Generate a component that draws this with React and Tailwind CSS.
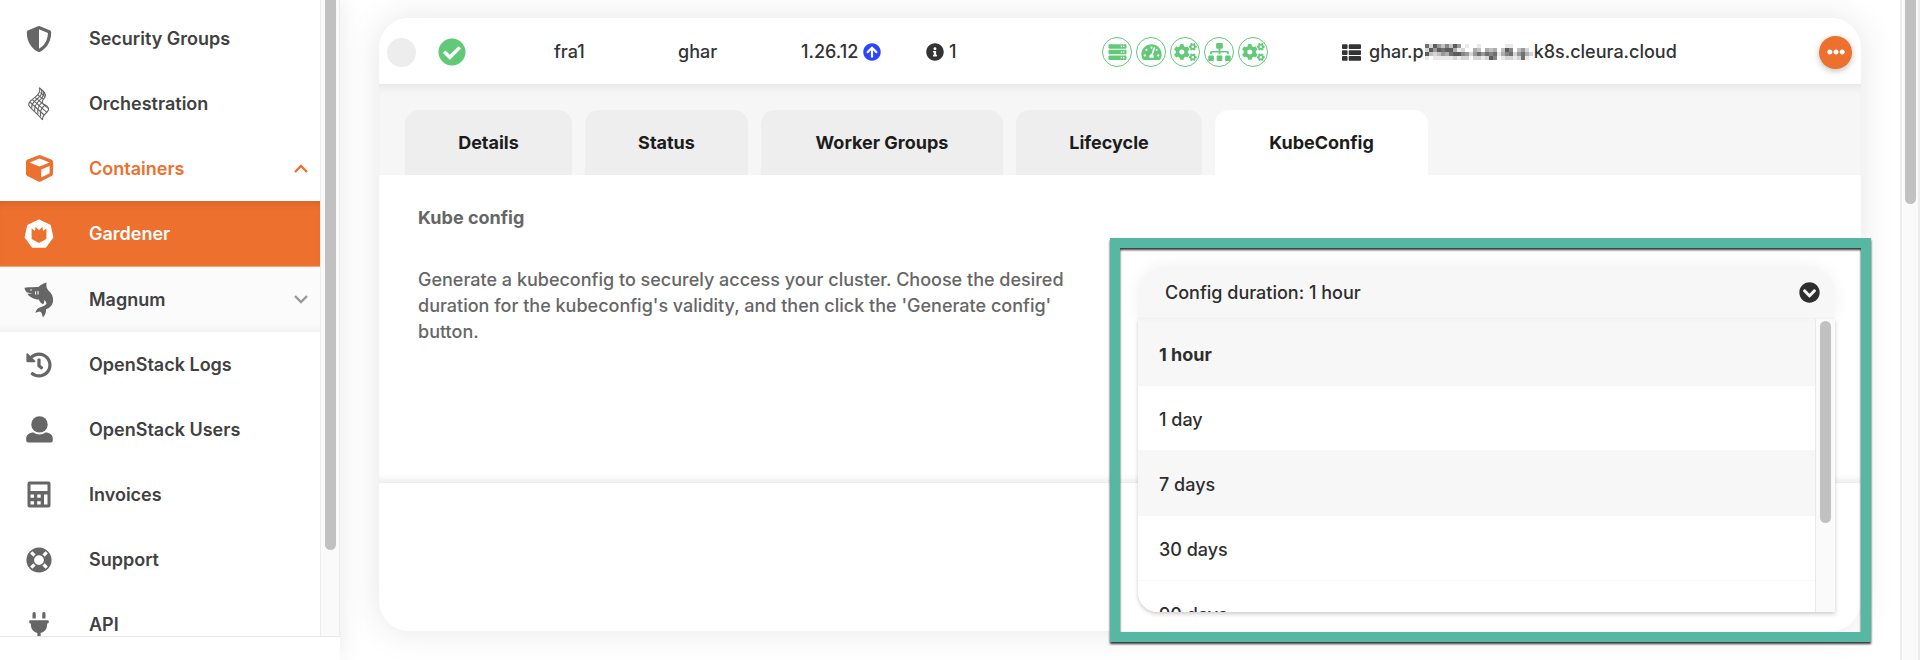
import React from "react";
import {
  FaArrowCircleUp,
  FaCheckCircle,
  FaChevronCircleDown,
  FaCogs,
  FaCube,
  FaEllipsisH,
  FaHistory,
  FaInfoCircle,
  FaLifeRing,
  FaPlug,
  FaServer,
  FaShieldAlt,
  FaSitemap,
  FaTachometerAlt,
  FaThList,
} from "react-icons/fa";

function OrchestrationIcon() {
  return (
    <svg viewBox="0 0 22 34" className="h-[34px] w-[22px]" fill="none" stroke="currentColor" strokeWidth="1.1" strokeLinejoin="round" aria-hidden="true">
      <path d="M11.3 0.8 C16 4.5 18.6 7 17 10 C15.6 12.6 12.6 14.4 15 16.6 C18 18.6 21.4 20 20.4 23 C19 26.6 13.6 28 14.6 33" />
      <path d="M11.3 0.8 C13.2 5 10 8 6.6 10.6 C2.6 13.6 -0.4 16 1 18.6 C4 23 10 27 14.6 33" />
      <path d="M13.4 2.6 C15.2 7 12 9.6 8.8 12.2 C5.2 15 3 17.4 3.8 21.4" />
      <path d="M15.4 4.6 C17 9 13.4 11.6 11 13.8 C8 16.6 6 19.6 6.8 24.4" />
      <path d="M14.2 15.4 C11 18 9 21.6 10 27.2" />
      <path d="M17 18 C14 20.4 11.4 24 12.6 29.6" />
      <path d="M12.4 5.6 L17 9.6 M9.8 8 L15.4 12.4 M7 10.4 L20.6 21.6 M4.4 12.6 L18.6 25.2 M1.8 15 L16.2 28" />
    </svg>
  );
}

function GardenerIcon() {
  return (
    <svg viewBox="0 0 30 30" className="h-[30px] w-[30px]" aria-hidden="true">
      <path
        fill="currentColor"
        stroke="currentColor"
        strokeWidth="1.5"
        strokeLinejoin="round"
        d="M15 1.2 L26 6.4 L28.6 18.2 L21.4 28 H8.6 L1.4 18.2 L4 6.4 Z"
      />
      <path fill="#ed702e" d="M7.6 9.6 L11 12 L11.6 7.8 L15 11.2 L18.4 7.8 L19 12 L22.4 9.6 V20 L15 24 L7.6 20 Z" />
    </svg>
  );
}

function SharkIcon() {
  return (
    <svg viewBox="0 0 30 36" className="h-9 w-[30px]" aria-hidden="true">
      <path
        fill="currentColor"
        d="M0.5 5.8 C6 5 11 5.2 14.5 5 C16.5 2.8 19.5 1 22.6 0.4 C22 3.5 22.4 6 24.2 8.2 C28 11.5 29.6 15.4 29 19.4 C28.3 23.6 25.4 26 22 27.2 C22.4 30 21 33.4 18.8 35.6 C18.4 32.6 17.6 30.2 15.8 29.6 C14.4 29.6 12.6 30.4 11.4 31 C12 28 13.6 26 16.4 25.2 C19.4 24.6 21.8 23.6 22.4 21.6 C22.4 20 21.4 18.8 20 18 C20.6 20 20.2 21.4 19 22.2 C17.6 21.4 15.4 20 14.8 17.6 C10 17.4 5.4 15 3.4 11.8 L8.8 11.6 L3.2 10.6 C1.6 9.2 0.6 7.4 0.5 5.8 Z"
      />
      <circle cx="7" cy="8" r="0.8" fill="#fff" />
      <path d="M11.6 9.4 V12.6 M14 9 V12.6" stroke="#fff" strokeWidth="1" />
    </svg>
  );
}

function UserIcon() {
  return (
    <svg viewBox="0 0 27 27" className="size-[27px]" fill="currentColor" aria-hidden="true">
      <circle cx="13.5" cy="8.4" r="8.2" />
      <path d="M7.6 16.6 C9.2 17.8 11.2 18.5 13.5 18.5 C15.8 18.5 17.8 17.8 19.4 16.6 C23.8 16.6 26.8 19 26.8 22.6 V24.6 A2 2 0 0 1 24.8 26.6 H2.2 A2 2 0 0 1 0.2 24.6 V22.6 C0.2 19 3.2 16.6 7.6 16.6 Z" />
    </svg>
  );
}

function InvoiceIcon() {
  return (
    <svg viewBox="0 0 24 27" className="h-[27px] w-6" aria-hidden="true">
      <path
        fill="currentColor"
        fillRule="evenodd"
        d="M2.5 0.5 H21.5 A2 2 0 0 1 23.5 2.5 V24.5 A2 2 0 0 1 21.5 26.5 H2.5 A2 2 0 0 1 0.5 24.5 V2.5 A2 2 0 0 1 2.5 0.5 Z M3.5 3.5 V10 H20.5 V3.5 Z M3.5 13.5 V16.7 H7 V13.5 Z M10.2 13.5 V16.7 H13.7 V13.5 Z M17 13.5 V23.4 H20.5 V13.5 Z M3.5 20.2 V23.4 H7 V20.2 Z M10.2 20.2 V23.4 H13.7 V20.2 Z"
      />
    </svg>
  );
}

function Chevron({ up, className }) {
  return (
    <svg viewBox="0 0 14 9" className={"h-[9px] w-[14px] " + className} fill="none" stroke="currentColor" strokeWidth="2.4" aria-hidden="true">
      <path d={up ? "M1 8 L7 2 L13 8" : "M1 1 L7 7 L13 1"} />
    </svg>
  );
}

function NavItem({ icon, label, tone = "text-[#414141]", iconTone = "text-[#666]", trailing }) {
  return (
    <a href="#" className={"flex h-[65px] shrink-0 items-center pr-3 " + tone}>
      <span className={"flex w-[78px] shrink-0 justify-center " + iconTone}>{icon}</span>
      <span className="ml-[11px] flex-1 text-lg font-semibold">{label}</span>
      {trailing}
    </a>
  );
}

function Sidebar() {
  return (
    <aside className="z-10 flex w-[340px] shrink-0 flex-col bg-white shadow-[0_0_24px_rgba(0,0,0,0.09)]">
      <div className="flex min-h-0 flex-1 border-b border-[#e8e8e8]">
        <nav className="min-w-0 flex-1 overflow-hidden pt-[6px]">
          <NavItem icon={<FaShieldAlt className="size-[26px]" />} label="Security Groups" />
          <NavItem icon={<OrchestrationIcon />} label="Orchestration" />
          <NavItem
            icon={<FaCube className="size-[27px]" />}
            label="Containers"
            tone="text-[#ed702e]"
            iconTone="text-[#ed702e]"
            trailing={<Chevron up className="text-[#ed702e]" />}
          />
          <div className="border-b border-[#f3a67e] bg-[#ed702e] shadow-[inset_0_8px_8px_-6px_rgba(0,0,0,0.12)]">
            <NavItem icon={<GardenerIcon />} label="Gardener" tone="text-white" iconTone="text-white" />
          </div>
          <div className="bg-[#fbfbfb] shadow-[inset_0_-8px_8px_-6px_rgba(0,0,0,0.06)]">
            <NavItem icon={<SharkIcon />} label="Magnum" trailing={<Chevron className="text-[#999]" />} />
          </div>
          <NavItem icon={<FaHistory className="size-[26px]" />} label="OpenStack Logs" />
          <NavItem icon={<UserIcon />} label="OpenStack Users" />
          <NavItem icon={<InvoiceIcon />} label="Invoices" />
          <NavItem icon={<FaLifeRing className="size-[26px]" />} label="Support" />
          <NavItem icon={<FaPlug className="size-[26px]" />} label="API" />
        </nav>
        <div className="flex w-5 justify-center border-x border-[#ececec] bg-[#fafafa]">
          <div className="h-[550px] w-[11px] rounded-b-full bg-[#c1c1c1]" />
        </div>
      </div>
      <div className="h-[23px] shrink-0" />
    </aside>
  );
}

const services = [
  { name: "API server", Icon: FaServer },
  { name: "Control plane", Icon: FaTachometerAlt },
  { name: "Nodes", Icon: FaCogs },
  { name: "Network", Icon: FaSitemap },
  { name: "System components", Icon: FaCogs },
];

const mosaic = [
  "728536385010010000001100000",
  "285878841200430434038603520",
  "832354788652575767146725742",
  "101111121220221286012212710",
];

function Redaction() {
  return (
    <svg viewBox="0 0 108 16" className="mx-px h-4 w-[108px] shrink-0" shapeRendering="crispEdges" aria-hidden="true">
      {mosaic.map((row, y) =>
        row.split("").map((v, x) => (
          <rect key={x + "-" + y} x={x * 4} y={y * 4} width="4" height="4" fill="#333" fillOpacity={Number(v) / 10} />
        ))
      )}
    </svg>
  );
}

function ClusterRow() {
  return (
    <div className="grid h-[66px] grid-cols-[59px_116px_124px_123px_125px_176px_240px_1fr_auto] items-center rounded-t-[30px] bg-white pt-[2px] pr-[9px] text-lg font-medium text-[#333]">
      <input
        type="checkbox"
        aria-label="Select cluster ghar"
        className="ml-2 size-[29px] appearance-none rounded-full bg-[#ededed]"
      />
      <FaCheckCircle className="size-7 text-[#62c978]" />
      <span>fra1</span>
      <span>ghar</span>
      <span className="flex items-center gap-[5px]">
        1.26.12
        <FaArrowCircleUp className="size-[18px] text-[#2b44ff]" />
      </span>
      <span className="flex items-center gap-[5px]">
        <FaInfoCircle className="size-[18px]" />1
      </span>
      <span className="flex gap-1">
        {services.map(({ name, Icon }) => (
          <span
            key={name}
            title={name}
            className="flex size-[30px] items-center justify-center overflow-hidden rounded-full border border-[#62c978] text-[#62c978]"
          >
            <Icon className="h-[18px] w-[23px] shrink-0" />
          </span>
        ))}
      </span>
      <span className="flex items-center whitespace-nowrap">
        <FaThList className="mr-2 size-[19px]" />
        ghar.p
        <Redaction />
        k8s.cleura.cloud
      </span>
      <button
        type="button"
        aria-label="Cluster actions"
        className="flex size-[33px] items-center justify-center rounded-full bg-[#ed702e] text-white shadow-[0_2px_6px_rgba(0,0,0,0.25)]"
      >
        <FaEllipsisH className="size-[18px]" />
      </button>
    </div>
  );
}

const tabs = [
  { label: "Details", width: "w-[167px]" },
  { label: "Status", width: "w-[163px]" },
  { label: "Worker Groups", width: "w-[242px]" },
  { label: "Lifecycle", width: "w-[186px]" },
  { label: "KubeConfig", width: "w-[213px]", active: true },
];

function Tabs() {
  return (
    <div
      role="tablist"
      className="flex gap-[13px] bg-[#f6f6f6] px-[26px] pt-[26px] shadow-[inset_0_8px_10px_-6px_rgba(0,0,0,0.08)]"
    >
      {tabs.map((t) => (
        <button
          key={t.label}
          type="button"
          role="tab"
          aria-selected={!!t.active}
          className={
            "h-[65px] rounded-t-[14px] text-lg font-bold text-[#1c1c1c] " + t.width + (t.active ? " bg-white" : " bg-[#eeeeee]")
          }
        >
          {t.label}
        </button>
      ))}
    </div>
  );
}

const durations = ["1 hour", "1 day", "7 days", "30 days", "90 days"];

function DurationSelect() {
  return (
    <div className="relative self-start">
      <button
        type="button"
        aria-haspopup="listbox"
        aria-expanded="true"
        className="flex h-[53px] w-full items-center justify-between rounded-t-[28px] bg-[#f7f7f7] pr-[15px] pl-[27px] text-lg font-medium text-[#2e2e2e] shadow-[0_0_16px_rgba(0,0,0,0.06)]"
      >
        Config duration: 1 hour
        <FaChevronCircleDown className="size-[21px]" />
      </button>
      <div className="absolute inset-x-0 top-full z-10 flex h-[293px] overflow-hidden rounded-bl-[20px] bg-white shadow-[0_2px_4px_rgba(0,0,0,0.2)]">
        <ul role="listbox" aria-label="Config duration" className="min-w-0 flex-1 overflow-hidden border-t-2 border-[#f5f5f5]">
          {durations.map((d, i) => (
            <li
              key={d}
              role="option"
              aria-selected={i === 0}
              className={
                "flex h-[65px] items-center border-b border-[#f7f7f7] px-[21px] pt-1 text-lg text-[#2e2e2e] " +
                (i === 0 ? "bg-[#f7f7f7] font-bold" : i === 2 ? "bg-[#f7f7f7] font-medium" : "bg-white font-medium")
              }
            >
              {d}
            </li>
          ))}
        </ul>
        <div className="flex w-5 justify-center border-l border-[#e8e8e8] bg-[#fafafa] pt-[2px]">
          <div className="h-[202px] w-[11px] rounded-full bg-[#c1c1c1]" />
        </div>
      </div>
      <div className="pointer-events-none absolute -top-7 -right-9 -left-7 z-20 h-[404px] border-10 border-[#56b7a2] drop-shadow-[0_2px_1px_rgba(0,0,0,0.8)]" />
    </div>
  );
}

export default function App() {
  return (
    <div className="flex h-screen overflow-hidden bg-white font-['Inter',sans-serif]">
      <Sidebar />
      <main className="min-w-0 flex-1 pt-[18px] pr-[39px] pl-[39px]">
        <section className="rounded-[30px] bg-white shadow-[0_0_36px_rgba(0,0,0,0.1)]">
          <ClusterRow />
          <Tabs />
          <div className="grid min-h-[308px] grid-cols-[680fr_697fr] gap-10 border-b border-[#ececec] pr-[26px] pl-[39px] shadow-[inset_0_-6px_6px_-3px_rgba(0,0,0,0.07)]">
            <div className="pt-[30px] text-lg leading-[26px] text-[#666]">
              <h2 className="font-bold">Kube config</h2>
              <p className="mt-9 font-medium">
                Generate a kubeconfig to securely access your cluster. Choose the desired duration for the kubeconfig's validity, and
                then click the 'Generate config' button.
              </p>
            </div>
            <div className="pt-[91px]">
              <DurationSelect />
            </div>
          </div>
          <div className="h-[148px]" />
        </section>
      </main>
      <div className="flex w-5 shrink-0 justify-center border-x-2 border-[#ececec] bg-[#fafafa]">
        <div className="h-[204px] w-[11px] rounded-b-full bg-[#c1c1c1]" />
      </div>
    </div>
  );
}
